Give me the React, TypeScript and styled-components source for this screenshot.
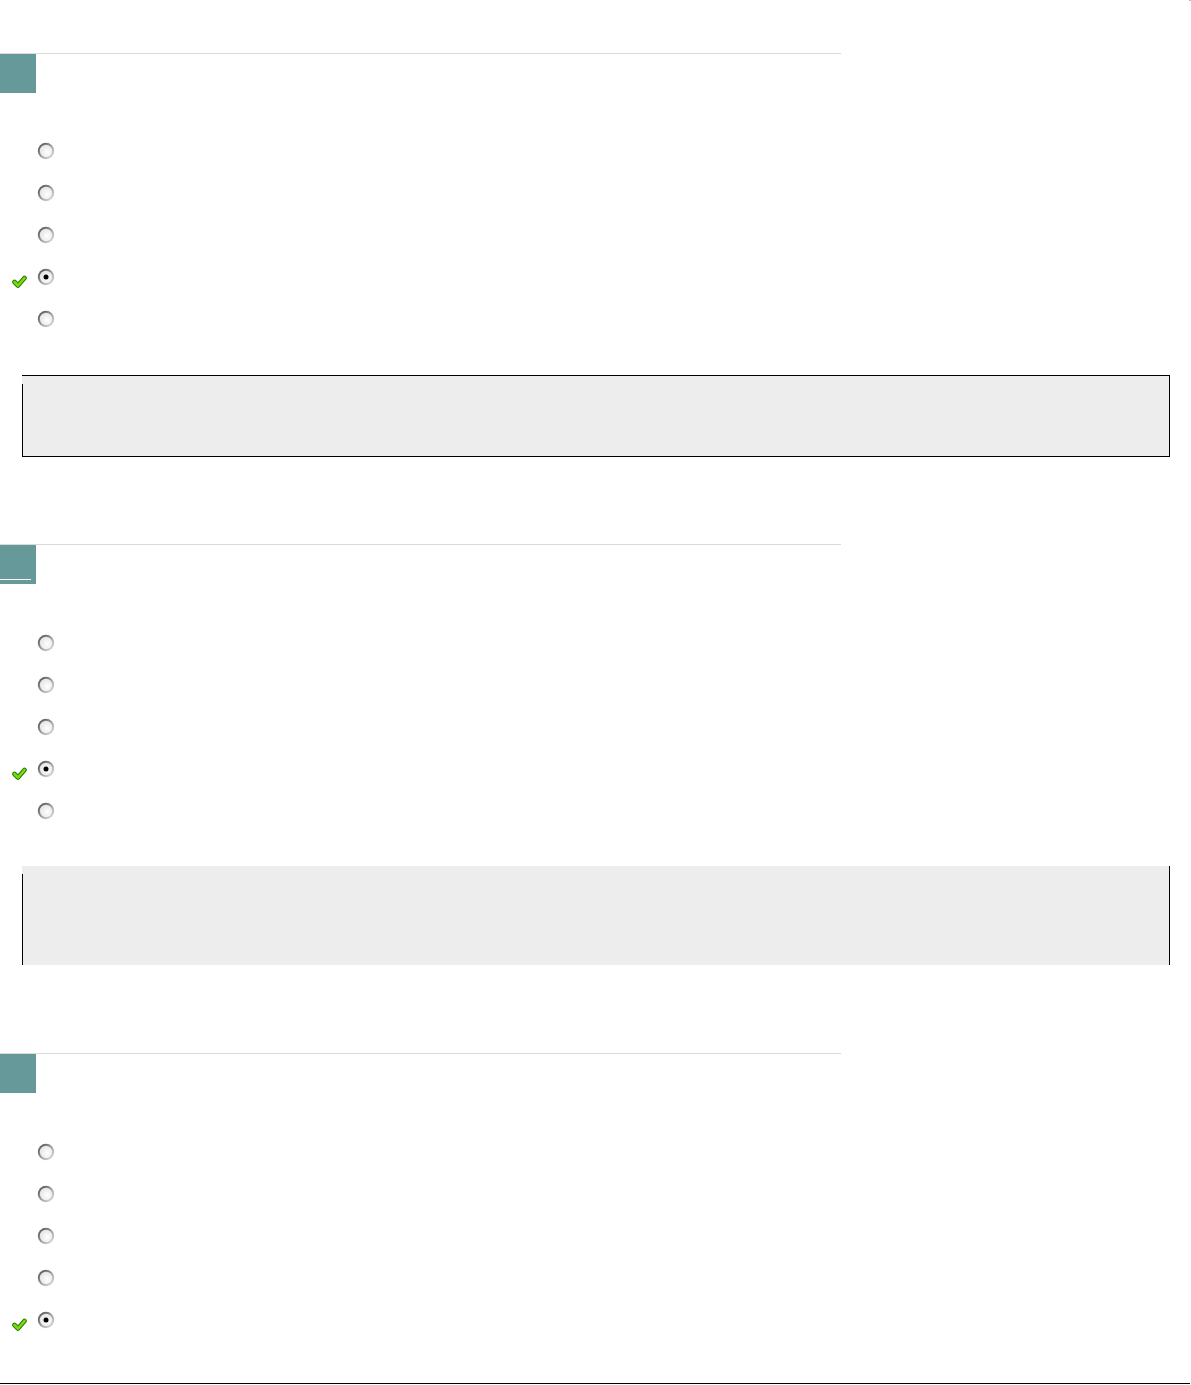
import styled, { createGlobalStyle } from 'styled-components';

/**
 * 문항 목록: 5개 보기 중 정답 하나에 체크 표시
 */

interface IQuestion {
	id: number;
	options: number;
	correct: number;
	underlined: boolean;
	framed: boolean;
	feedbackHeight: number;
}

const questions: IQuestion[] = [
	{ id: 1, options: 5, correct: 3, underlined: false, framed: true, feedbackHeight: 80 },
	{ id: 2, options: 5, correct: 3, underlined: true, framed: false, feedbackHeight: 99 },
	{ id: 3, options: 5, correct: 4, underlined: false, framed: false, feedbackHeight: 0 },
];

const GlobalStyle = createGlobalStyle`
	html, body {
		margin: 0;
		padding: 0;
		background: #ffffff;
		font-family: 'Liberation Sans', Arial, sans-serif;
	}
`;

const RadioIcon = ({ checked }: { checked: boolean }) => (
	<svg width="18" height="18" viewBox="0 0 18 18">
		<defs>
			<linearGradient id="ring" x1="0.1" y1="0.1" x2="0.9" y2="0.9">
				<stop offset="0" stopColor="#555555" />
				<stop offset="0.5" stopColor="#9a9a9a" />
				<stop offset="1" stopColor="#dcdcdc" />
			</linearGradient>
			<radialGradient id="fill" cx="0.6" cy="0.6" r="0.6">
				<stop offset="0" stopColor="#ffffff" />
				<stop offset="1" stopColor="#e6e6e6" />
			</radialGradient>
		</defs>
		<circle cx="9" cy="9" r="8.2" fill="url(#ring)" />
		<circle cx="9" cy="9" r="6.2" fill="url(#fill)" />
		{checked && <circle cx="9" cy="9" r="2.5" fill="#000" />}
	</svg>
);

const CheckIcon = () => (
	<svg width="15" height="13" viewBox="0 0 15 13">
		<polyline
			points="2.5,7 6,10.5 12.5,3"
			fill="none"
			stroke="#2f7a00"
			strokeWidth="4.6"
			strokeLinecap="round"
			strokeLinejoin="round"
		/>
		<polyline
			points="2.5,7 6,10.5 12.5,3"
			fill="none"
			stroke="#74dd10"
			strokeWidth="2.6"
			strokeLinecap="round"
			strokeLinejoin="round"
		/>
	</svg>
);

const Question = ({ question }: { question: IQuestion }) => {
	const { options, correct, underlined, framed, feedbackHeight } = question;

	return (
		<Section>
			<Header>
				<NumberBadge $underlined={underlined} />
			</Header>
			<OptionList>
				{Array.from({ length: options }).map((_, i) => (
					<OptionRow key={i}>
						<CheckSlot>{i === correct && <CheckIcon />}</CheckSlot>
						<RadioIcon checked={i === correct} />
					</OptionRow>
				))}
			</OptionList>
			{feedbackHeight > 0 && (
				<Feedback $framed={framed} style={{ height: feedbackHeight }} />
			)}
		</Section>
	);
};

const App = (): JSX.Element => {
	return (
		<>
			<GlobalStyle />
			<Page>
				{questions.map((q) => (
					<Question key={q.id} question={q} />
				))}
				<BottomRule />
			</Page>
			<CornerDot />
		</>
	);
};

export default App;

const Page = styled.div`
	padding-top: 53px;
	width: 1191px;
`;

const Section = styled.section`
	display: flex;
	flex-direction: column;
	margin-bottom: 87px;

	&:nth-of-type(2) {
		margin-bottom: 88px;
	}

	&:last-of-type {
		margin-bottom: 0;
	}
`;

const Header = styled.div`
	width: 841px;
	border-top: 1px solid #dadada;
	display: flex;
`;

const NumberBadge = styled.div<{ $underlined: boolean }>`
	width: 36px;
	height: 39px;
	background: #669999;
	position: relative;

	&::after {
		content: '';
		display: ${({ $underlined }) => ($underlined ? 'block' : 'none')};
		position: absolute;
		left: 0;
		bottom: 4px;
		width: 31px;
		height: 1px;
		background: #ffffff;
	}
`;

const OptionList = styled.ul`
	list-style: none;
	margin: 37px 0 0;
	padding: 0 0 0 12px;
	display: flex;
	flex-direction: column;

	section:nth-of-type(n + 2) & {
		margin-top: 38px;
	}
`;

const OptionRow = styled.li`
	height: 42px;
	display: flex;
	align-items: center;
	gap: 10px;
`;

const CheckSlot = styled.span`
	width: 15px;
	height: 13px;
	margin-top: 8px;
	display: flex;
`;

const Feedback = styled.div<{ $framed: boolean }>`
	position: relative;
	box-sizing: content-box;
	margin: 35px 0 0 22px;
	width: 1147px;
	background: #ededed;
	border-right: 1px solid #000;
	border-top: ${({ $framed }) => ($framed ? '1px solid #000' : 'none')};
	border-bottom: ${({ $framed }) => ($framed ? '1px solid #000' : 'none')};

	section:nth-of-type(n + 2) & {
		margin-top: 34px;
	}

	&::before {
		content: '';
		position: absolute;
		left: 0;
		top: 8px;
		bottom: 0;
		width: 1px;
		background: #000;
	}
`;

const BottomRule = styled.div`
	margin-top: 42px;
	width: 1190px;
	border-top: 1px solid #000;
`;

const CornerDot = styled.div`
	position: absolute;
	top: 0;
	right: 0;
	width: 2px;
	height: 1px;
	background: #bbbbbb;
`;
